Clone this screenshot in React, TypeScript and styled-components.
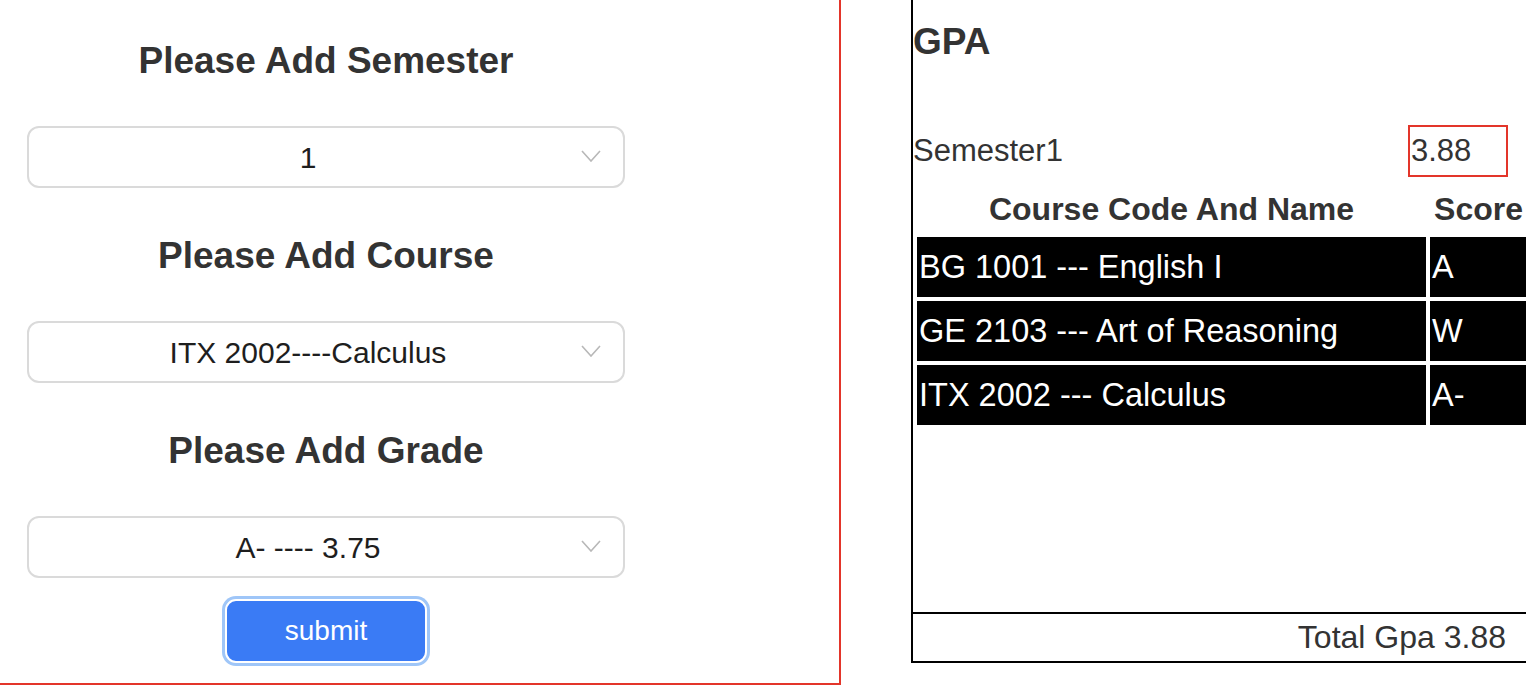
import React from "react";
import styled, { createGlobalStyle } from "styled-components";

const Global = createGlobalStyle`
  html, body { margin: 0; padding: 0; background: #ffffff; overflow: hidden; }
  body { font-family: "Liberation Sans", Arial, sans-serif; }
  * { box-sizing: border-box; }
`;

const Page = styled.div`
  display: flex;
  align-items: flex-start;
  gap: 70px;
  width: 1526px;
  height: 694px;
`;

const FormPanel = styled.div`
  width: 841px;
  height: 685px;
  flex-shrink: 0;
  border-right: 2px solid #e3352a;
  border-bottom: 2px solid #e3352a;
`;

const FormColumn = styled.form`
  width: 652px;
  display: flex;
  flex-direction: column;
  align-items: center;
  padding-top: 39px;
`;

const Heading = styled.h3<{ $first?: boolean }>`
  margin: ${(p) => (p.$first ? "0" : "46px")} 0 43px;
  font-size: 37px;
  line-height: 44px;
  font-weight: 700;
  color: #333333;
`;

const SelectWrap = styled.div`
  position: relative;
  width: 598px;
  height: 62px;
`;

const Select = styled.select`
  appearance: none;
  -webkit-appearance: none;
  width: 100%;
  height: 100%;
  border: 2px solid #dadada;
  border-radius: 12px;
  background: #ffffff;
  font-family: "Liberation Sans", Arial, sans-serif;
  font-size: 30px;
  color: #1e1e1e;
  text-align: center;
  text-align-last: center;
  padding: 0 36px 0 0;
  outline: none;
`;

const Chevron = styled.svg`
  position: absolute;
  right: 24px;
  top: 24px;
  pointer-events: none;
`;

const SubmitRing = styled.div`
  margin-top: 18px;
  padding: 3px;
  border-radius: 14px;
  background: #9fc6f8;
`;

const SubmitButton = styled.button`
  width: 202px;
  height: 64px;
  border: 2px solid #ffffff;
  border-radius: 11px;
  background: #3a7bf5;
  color: #ffffff;
  font-family: "Liberation Sans", Arial, sans-serif;
  font-size: 28px;
  padding: 0;
  cursor: pointer;
`;

const GpaPanel = styled.div`
  width: 620px;
  height: 663px;
  flex-shrink: 0;
  border-left: 2px solid #000000;
  border-bottom: 2px solid #000000;
  display: flex;
  flex-direction: column;
`;

const GpaTitle = styled.h2`
  margin: 20px 0 0;
  font-size: 37px;
  line-height: 44px;
  font-weight: 700;
  color: #333333;
`;

const SemesterRow = styled.div`
  margin-top: 61px;
  display: flex;
  align-items: center;
  justify-content: space-between;
  padding-right: 23px;
`;

const SemesterLabel = styled.span`
  font-size: 31px;
  color: #333333;
`;

const SemesterGpa = styled.span`
  width: 100px;
  height: 52px;
  border: 2px solid #e3352a;
  display: flex;
  align-items: center;
  padding-left: 1px;
  font-size: 31px;
  color: #333333;
`;

const Table = styled.table`
  margin-top: 4px;
  width: 100%;
  table-layout: fixed;
  border-spacing: 4px;
`;

const HeadCell = styled.th`
  height: 48px;
  padding: 0;
  font-size: 32px;
  font-weight: 700;
  color: #333333;
  text-align: center;
  white-space: nowrap;
`;

const Cell = styled.td`
  height: 60px;
  padding: 0 0 0 2px;
  background: #000000;
  color: #ffffff;
  font-size: 32.5px;
  white-space: nowrap;
  overflow: hidden;
`;

const Spacer = styled.div`
  flex: 1;
`;

const Footer = styled.div`
  border-top: 2px solid #000000;
  height: 49px;
  display: flex;
  align-items: center;
  justify-content: flex-end;
  padding-right: 25px;
  font-size: 32px;
  color: #333333;
`;

const ChevronIcon = () => (
  <Chevron width="20" height="12" viewBox="0 0 20 12">
    <polyline points="1,1 10,11 19,1" fill="none" stroke="#b8b8b8" strokeWidth="1.6" />
  </Chevron>
);

const Dropdown = ({ value, options }: { value: string; options: string[] }) => (
  <SelectWrap>
    <Select defaultValue={value}>
      {options.map((o) => (
        <option key={o} value={o}>
          {o}
        </option>
      ))}
    </Select>
    <ChevronIcon />
  </SelectWrap>
);

const courses = [
  { name: "BG 1001 --- English I", score: "A" },
  { name: "GE 2103 --- Art of Reasoning", score: "W" },
  { name: "ITX 2002 --- Calculus", score: "A-" },
];

export default function App() {
  return (
    <>
      <Global />
      <Page>
        <FormPanel>
          <FormColumn onSubmit={(e) => e.preventDefault()}>
            <Heading $first>Please Add Semester</Heading>
            <Dropdown value="1" options={["1", "2", "3", "4"]} />
            <Heading>Please Add Course</Heading>
            <Dropdown
              value="ITX 2002----Calculus"
              options={["BG 1001----English I", "GE 2103----Art of Reasoning", "ITX 2002----Calculus"]}
            />
            <Heading>Please Add Grade</Heading>
            <Dropdown value="A- ---- 3.75" options={["A ---- 4.00", "A- ---- 3.75", "B+ ---- 3.25", "W ---- 0.00"]} />
            <SubmitRing>
              <SubmitButton type="submit">submit</SubmitButton>
            </SubmitRing>
          </FormColumn>
        </FormPanel>
        <GpaPanel>
          <GpaTitle>GPA</GpaTitle>
          <SemesterRow>
            <SemesterLabel>Semester1</SemesterLabel>
            <SemesterGpa>3.88</SemesterGpa>
          </SemesterRow>
          <Table>
            <colgroup>
              <col style={{ width: "509px" }} />
              <col />
            </colgroup>
            <thead>
              <tr>
                <HeadCell>Course Code And Name</HeadCell>
                <HeadCell>Score</HeadCell>
              </tr>
            </thead>
            <tbody>
              {courses.map((c) => (
                <tr key={c.name}>
                  <Cell>{c.name}</Cell>
                  <Cell>{c.score}</Cell>
                </tr>
              ))}
            </tbody>
          </Table>
          <Spacer />
          <Footer>Total Gpa 3.88</Footer>
        </GpaPanel>
      </Page>
    </>
  );
}
